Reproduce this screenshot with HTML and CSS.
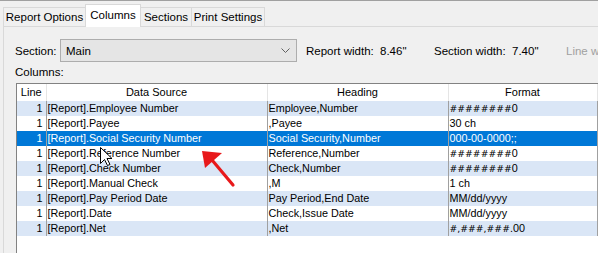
FILE: index.html
```html
<!DOCTYPE html>
<html>
<head>
<meta charset="utf-8">
<link rel="stylesheet" href="styles.css">
</head>
<body>
<div class="win">
  <div class="tabs">
    <div class="tab t1">Report Options</div>
    <div class="tab active t2">Columns</div>
    <div class="tab t3">Sections</div>
    <div class="tab t4">Print Settings</div>
  </div>
  <div class="panel">
    <div class="section-row">
      <span class="lbl sec">Section:</span>
      <div class="combo">
        <span>Main</span>
        <svg class="chev" width="9" height="6" viewBox="0 0 9 6"><path d="M0.5 0.5 L4.5 4.5 L8.5 0.5" fill="none" stroke="#606060" stroke-width="1"/></svg>
      </div>
      <span class="lbl rw">Report width:</span><span class="val v1">8.46"</span>
      <span class="lbl sw">Section width:</span><span class="val v2">7.40"</span>
      <span class="lbl dis">Line width:</span>
    </div>
    <div class="cols-lbl">Columns:</div>
    <div class="grid">
      <table>
        <colgroup><col class="c-line"><col class="c-src"><col class="c-head"><col class="c-fmt"></colgroup>
        <thead>
          <tr><th>Line</th><th>Data Source</th><th>Heading</th><th>Format</th></tr>
        </thead>
        <tbody>
          <tr class="alt"><td class="num">1</td><td>[Report].Employee Number</td><td>Employee,Number</td><td><span class="h">########</span>0</td></tr>
          <tr><td class="num">1</td><td>[Report].Payee</td><td>,Payee</td><td>30 ch</td></tr>
          <tr class="sel"><td class="num">1</td><td>[Report].Social Security Number</td><td>Social Security,Number</td><td>000-00-0000;;</td></tr>
          <tr><td class="num">1</td><td>[Report].Reference Number</td><td>Reference,Number</td><td><span class="h">########</span>0</td></tr>
          <tr class="alt"><td class="num">1</td><td>[Report].Check Number</td><td>Check,Number</td><td><span class="h">########</span>0</td></tr>
          <tr><td class="num">1</td><td>[Report].Manual Check</td><td>,M</td><td>1 ch</td></tr>
          <tr class="alt"><td class="num">1</td><td>[Report].Pay Period Date</td><td>Pay Period,End Date</td><td>MM/dd/yyyy</td></tr>
          <tr><td class="num">1</td><td>[Report].Date</td><td>Check,Issue Date</td><td>MM/dd/yyyy</td></tr>
          <tr class="alt"><td class="num">1</td><td>[Report].Net</td><td>,Net</td><td><span class="h">#,###,###</span>.00</td></tr>
        </tbody>
      </table>
    </div>
  </div>
</div>
<svg class="overlay" width="598" height="253" viewBox="0 0 598 253">
  <path d="M100.5 147.5 L100.5 163.5 L104.5 159.5 L107.5 165.5 L110 164.5 L107 158.5 L112 158.5 Z" fill="#fff" stroke="#000" stroke-width="1" stroke-linejoin="miter"/>
  <line x1="233" y1="185" x2="212" y2="160" stroke="#e8191b" stroke-width="3.2" stroke-linecap="round"/>
  <polygon points="202,151 222,153 205,168" fill="#e8191b"/>
</svg>
</body>
</html>
```
FILE: styles.css
```css
html, body {
  margin: 0;
  padding: 0;
}
body {
  width: 598px;
  height: 253px;
  overflow: hidden;
  background: #f0f0f0;
  font-family: "Liberation Sans", Arial, sans-serif;
  font-size: 11px;
  color: #000;
  position: relative;
}
.win {
  border-top: 1px solid #a0a0a0;
  width: 640px;
}
.tabs {
  display: flex;
  align-items: flex-end;
  padding-left: 3px;
  margin-top: 3px;
  height: 22px;
  position: relative;
  z-index: 2;
}
.tab {
  box-sizing: border-box;
  height: 19px;
  border: 1px solid #d9d9d9;
  border-bottom: none;
  background: #f0f0f0;
  display: flex;
  align-items: center;
  justify-content: center;
  font-size: 11.5px;
  margin-right: -1px;
}
.tab.active {
  background: #fff;
  margin-bottom: -1px;
  padding-bottom: 2px;
  height: 23px;
}
.t1 { width: 83px; }
.t2 { width: 56px; }
.t3 { width: 52px; }
.t4 { width: 74px; }
.panel {
  margin-left: 3px;
  border: 1px solid #d9d9d9;
  background: #f0f0f0;
  height: 240px;
  position: relative;
  z-index: 1;
}
.section-row {
  display: flex;
  align-items: center;
  margin-top: 12px;
  height: 23px;
}
.lbl, .val {
  font-size: 11.5px;
  white-space: nowrap;
}
.sec { margin-left: 11px; width: 45px; }
.combo {
  box-sizing: border-box;
  width: 237px;
  height: 23px;
  border: 1px solid #adadad;
  background: #e5e5e5;
  display: flex;
  align-items: center;
  justify-content: space-between;
  padding: 0 6px 0 5px;
  font-size: 11.5px;
}
.chev { display: block; }
.rw { margin-left: 9px; width: 74px; }
.v1 { width: 54px; }
.sw { width: 78px; }
.v2 { width: 54px; }
.dis { color: #a0a0a0; }
.cols-lbl {
  margin-top: 4px;
  margin-left: 11px;
  height: 13px;
  line-height: 13px;
  font-size: 11.5px;
}
.grid {
  margin-top: 4px;
  margin-left: 12px;
  width: 600px;
  height: 180px;
  background: #fff;
  border-left: 1px solid #828282;
  border-top: 1px solid #828282;
}
table {
  border-collapse: collapse;
  table-layout: fixed;
  width: 580px;
}
.c-line { width: 29px; }
.c-src { width: 221px; }
.c-head { width: 181px; }
.c-fmt { width: 149px; }
th {
  font-weight: normal;
  height: 17px;
  padding: 0;
  line-height: 17px;
  text-align: center;
  border-right: 1px solid #e5e5e5;
  white-space: nowrap;
  overflow: hidden;
}
td {
  height: 15px;
  line-height: 15px;
  padding: 0 0 0 1px;
  border-right: 1px solid #a0a0a0;
  white-space: nowrap;
  overflow: hidden;
  font-size: 10.8px;
}
td.num {
  text-align: right;
  padding: 0 3px 0 0;
}
.h {
  font-family: "DejaVu Sans", sans-serif;
  font-size: 9.3px;
}
tr.alt td { background: #dae6f6; }
tr.sel td { background: #0078d7; color: #fff; }
.overlay {
  position: absolute;
  left: 0;
  top: 0;
  z-index: 5;
  pointer-events: none;
}
```
